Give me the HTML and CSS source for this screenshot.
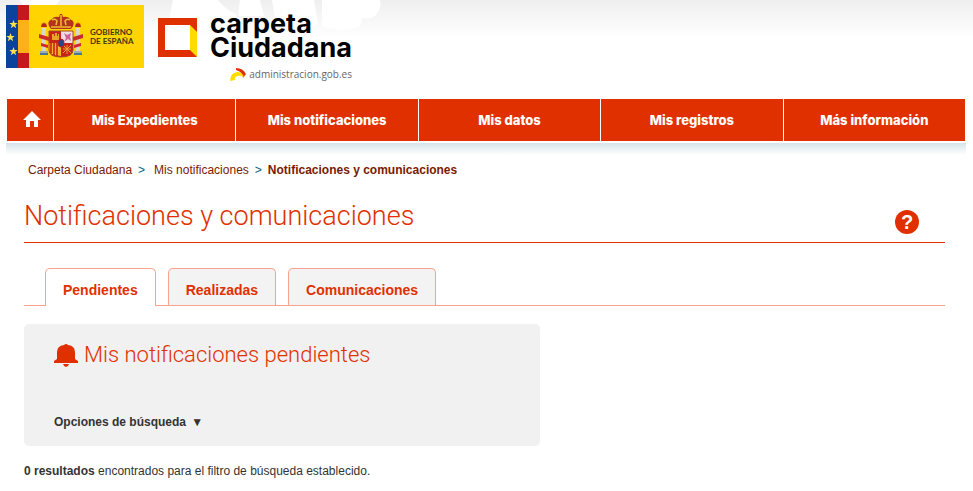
FILE: index.html
```html
<!DOCTYPE html>
<html lang="es">
<head>
  <meta charset="UTF-8" />
  <meta name="viewport" content="width=device-width, initial-scale=1.0"/>
  <title>Carpeta Ciudadana - Notificaciones y comunicaciones</title>
  <link rel="stylesheet" href="styles.css">
</head>
<body>
  <header class="cabecera">
    <svg class="nubes" width="400" height="40" viewBox="0 0 400 40" aria-hidden="true">
      <g fill="#fff">
        <path d="M20 0H60L54 8H24Z"/>
        <path d="M173 0H218Q226 10 236 14L238 30H168Q170 12 173 0Z"/>
        <path d="M240 0H260L264 16H238Z"/>
        <path d="M272 0H314L318 24Q300 34 276 24Z"/>
        <path d="M322 0H380Q382 8 376 15Q370 20 362 18L360 26Q340 34 322 26Z"/>
      </g>
    </svg>
    <a class="gobierno" href="#" aria-label="Gobierno de España">
      <svg class="escudo" width="84" height="63" viewBox="0 0 84 63" aria-hidden="true">
        <rect width="84" height="63" fill="#ffd400"/>
        <rect width="12" height="63" fill="#0b429b"/>
        <rect x="12" width="11" height="63" fill="#c4181c"/>
        <rect x="12" y="15" width="11" height="33" fill="#fbb117"/>
        <g fill="#ffe24a">
          <path d="M7.500 15l1.100 3h3.100l-2.500 2 1 3.200-2.700-1.900-2.700 1.900 1-3.200-2.500-2h3.100z"/>
          <path d="M4.500 28l1.100 3h3.100l-2.500 2 1 3.200-2.700-1.900-2.700 1.900 1-3.200-2.500-2h3.100z"/>
          <path d="M7.500 42l1.100 3h3.100l-2.500 2 1 3.200-2.700-1.900-2.700 1.900 1-3.200-2.500-2h3.100z"/>
        </g>
        <!-- columnas -->
        <g fill="#d9d6c8">
          <rect x="36" y="23" width="4" height="23"/>
          <rect x="70" y="23" width="4" height="23"/>
        </g>
        <path d="M35 22h6l-1-4-1 1-1-2-1 2-1-1zM69 22h6l-1-4-1 1-1-2-1 2-1-1z" fill="#b5261e"/>
        <path d="M33 29l10 3v4l-10-3zM67 32l10-3v4l-10 3zM35 38l7 2v3l-7-2zM68 40l7-2v3l-7 2z" fill="#cf2a2a"/>
        <path d="M34 46h8v4h-8zM68 46h8v4h-8z" fill="#4b7591"/>
        <path d="M34 47h8M68 47h8" stroke="#e8e4d4"/>
        <!-- corona -->
        <path d="M45 24q-6-7 1-10 2-3 7-2l1-3h2l1 3q5-1 7 2 7 3 1 10z" fill="#b3331f"/>
        <path d="M46 15q3-2 5 1l-1 4M64 15q-3-2-5 1l1 4M55 10v11M45 22h20" stroke="#f0bd2c" stroke-width="1.500" fill="none"/>
        <!-- cuarteles -->
        <path d="M43 26h24v19q0 7-12 7t-12-7z" fill="#c9211e"/>
        <path d="M55 26h12v12H55z" fill="#efdde3"/>
        <path d="M58 28l3 2 4-2-1 4 1 4-3-2-4 3 2-4z" fill="#d0609a"/>
        <path d="M46 35v-6h2v2h1v-3h2v3h1v-2h1v6z" fill="#e7a52a"/>
        <path d="M43 38h12v13q-12-1-12-6z" fill="#f2b525"/>
        <path d="M45 38v10M48 38v12M51 38v13" stroke="#c4181c" stroke-width="1.500"/>
        <path d="M57 40l8 8M65 40l-8 8M57 44h8M61 40v9" stroke="#e7a52a"/>
        <ellipse cx="55" cy="38" rx="3" ry="4" fill="#27458d" stroke="#c4181c"/>
        <path d="M43 26h24v19q0 7-12 7t-12-7z" fill="none" stroke="#a04a22"/>
      </svg>
      <span>GOBIERNO<br>DE ESPAÑA</span>
    </a>
    <a class="carpeta" href="#" aria-label="Carpeta Ciudadana">
      <svg class="marco" width="39" height="39" viewBox="0 0 39 39" aria-hidden="true">
        <path d="M0 0H39V39H0Z" fill="#e13000"/>
        <path d="M32 7L39 14V39L32 32Z" fill="#ffdc00"/>
        <path d="M7 7H32V32H7Z" fill="#fff"/>
      </svg>
      <span class="marca">
        <span class="nombre">carpeta</span>
        <span class="nombre">Ciudadana</span>
        <span class="portal">
          <svg width="16" height="15" viewBox="0 0 16 15" aria-hidden="true">
            <path d="M6 1Q13 1 16 7L13 11Q13 5 6 3Z" fill="#e13000"/>
            <path d="M0 14Q0 6 7 5Q12 5 14 10Q10 8 7 9Q4 10 5 13Z" fill="#ffdc00"/>
          </svg>
          administracion.gob.es
        </span>
      </span>
    </a>
  </header>

  <nav class="menu">
    <a class="inicio" href="#" aria-label="Inicio">
      <svg width="18" height="16" viewBox="0 0 18 16" aria-hidden="true">
        <path d="M9 0L18 9H15V16H11V10H7V16H3V9H0Z" fill="#fff"/>
      </svg>
    </a>
    <a href="#">Mis Expedientes</a>
    <a href="#">Mis notificaciones</a>
    <a href="#">Mis datos</a>
    <a href="#">Mis registros</a>
    <a href="#">Más información</a>
  </nav>
  <div class="sombra"></div>

  <nav class="migas">
    <a href="#">Carpeta Ciudadana</a>
    <span>&gt;</span>
    <a href="#">Mis notificaciones</a>
    <span>&gt;</span>
    <strong>Notificaciones y comunicaciones</strong>
  </nav>

  <main class="contenido">
    <div class="titulo">
      <h1>Notificaciones y comunicaciones</h1>
      <a class="ayuda" href="#" aria-label="Ayuda">?</a>
    </div>

    <div class="pestanas" role="tablist">
      <button class="activa" type="button" role="tab" aria-selected="true">Pendientes</button>
      <button type="button" role="tab" aria-selected="false">Realizadas</button>
      <button type="button" role="tab" aria-selected="false">Comunicaciones</button>
    </div>

    <section class="panel">
      <h2>
        <svg width="24" height="23" viewBox="0 0 24 23" aria-hidden="true">
          <path d="M10 1Q12-1 14 1Q21 2 21 8V15L24 17V19H0V17L3 15V8Q3 2 10 1Z" fill="#e13000"/>
          <path d="M9 20H15Q14 23 12 23T9 20Z" fill="#e13000"/>
        </svg>
        Mis notificaciones pendientes
      </h2>
      <button class="opciones" type="button">Opciones de búsqueda <span>▼</span></button>
    </section>

    <p class="resultados"><strong>0 resultados</strong> encontrados para el filtro de búsqueda establecido.</p>
  </main>
</body>
</html>
```

FILE: styles.css
```css
body {
  font-family: "Liberation Sans", Arial, sans-serif;
  font-size: 12px;
  line-height: 16px;
  color: #333;
  background: #fff;
  margin: 0;
}
a {
  text-decoration: none;
}
.cabecera {
  position: relative;
  display: flex;
  align-items: flex-start;
  gap: 14px;
  padding: 5px 6px 0;
  margin-bottom: 17px;
  background: linear-gradient(#efefef, #fff 38px);
}
.nubes {
  position: absolute;
  top: 0;
  left: 0;
}
.gobierno {
  position: relative;
  display: flex;
  align-items: center;
  width: 138px;
  height: 63px;
  background: #ffd400;
  color: #3d3512;
  font-family: Lato, sans-serif;
  font-size: 8px;
  font-weight: bold;
  line-height: 9px;
}
.carpeta {
  position: relative;
  display: flex;
  gap: 13px;
  color: #000;
}
.marco {
  margin-top: 13px;
}
.marca {
  display: flex;
  flex-direction: column;
  padding-top: 7px;
}
.nombre {
  font-family: Inter, sans-serif;
  font-size: 27px;
  font-weight: bold;
  line-height: 24px;
}
.portal {
  display: flex;
  align-items: center;
  justify-content: flex-end;
  gap: 3px;
  margin-top: 6px;
  color: #666;
  font-family: "Open Sans", sans-serif;
  font-size: 10px;
  line-height: 16px;
}
.menu {
  display: flex;
  gap: 1px;
  margin: 0 8px 0 7px;
}
.menu a {
  flex: 1;
  background: #e13000;
  color: #fff;
  font-family: Inter, sans-serif;
  font-size: 13px;
  font-weight: 800;
  line-height: 42px;
  text-align: center;
}
.menu .inicio {
  display: flex;
  align-items: center;
  justify-content: center;
  flex: 0 0 46px;
  box-sizing: border-box;
  padding: 0 0 2px 4px;
}
.sombra {
  height: 12px;
  margin: 2px 7px 0 6px;
  background: linear-gradient(#d5e4e9, #fff);
}
.migas {
  display: flex;
  gap: 6px;
  padding: 7px 28px 0;
  color: #7a1a00;
}
.migas a {
  color: #7a1a00;
}
.migas a + span + a {
  margin-left: 3px;
}
.migas span {
  color: #00618a;
}
.contenido {
  padding: 0 28px 0 24px;
}
.titulo {
  display: flex;
  align-items: center;
  justify-content: space-between;
  margin-top: 20px;
  padding: 0 26px 8px 0;
  border-bottom: 1px solid #e13000;
}
h1, h2 {
  margin: 0;
  color: #e13000;
  font-family: Roboto, sans-serif;
  font-weight: 300;
}
h1 {
  font-size: 27px;
  line-height: 32px;
}
.ayuda {
  width: 24px;
  height: 24px;
  margin-top: 12px;
  border-radius: 50%;
  background: #e13000;
  color: #fff;
  font-size: 20px;
  font-weight: bold;
  line-height: 24px;
  text-align: center;
}
.pestanas {
  display: flex;
  gap: 12px;
  margin-top: 25px;
  padding-left: 21px;
  border-bottom: 1px solid #f9a28c;
}
.pestanas button {
  height: 37px;
  padding: 6px 17px 0;
  border: 1px solid #f9a28c;
  border-bottom: none;
  border-radius: 5px 5px 0 0;
  background: #f3f3f3;
  color: #e13000;
  font-family: inherit;
  font-size: 14px;
  font-weight: bold;
  cursor: pointer;
}
.pestanas .activa {
  height: 38px;
  margin-bottom: -1px;
  padding-bottom: 1px;
  background: #fff;
}
.panel {
  width: 56%;
  margin-top: 18px;
  padding: 16px 30px;
  box-sizing: border-box;
  border-radius: 5px;
  background: #f1f1f1;
}
h2 {
  display: flex;
  align-items: center;
  gap: 6px;
  font-size: 22px;
  line-height: 30px;
}
.opciones {
  display: block;
  margin-top: 44px;
  padding: 0;
  border: none;
  background: none;
  color: #333;
  font-family: inherit;
  font-size: 12px;
  font-weight: bold;
  line-height: 16px;
  cursor: pointer;
}
.opciones span {
  margin-left: 2px;
}
.resultados {
  margin: 17px 0 12px;
}
```
